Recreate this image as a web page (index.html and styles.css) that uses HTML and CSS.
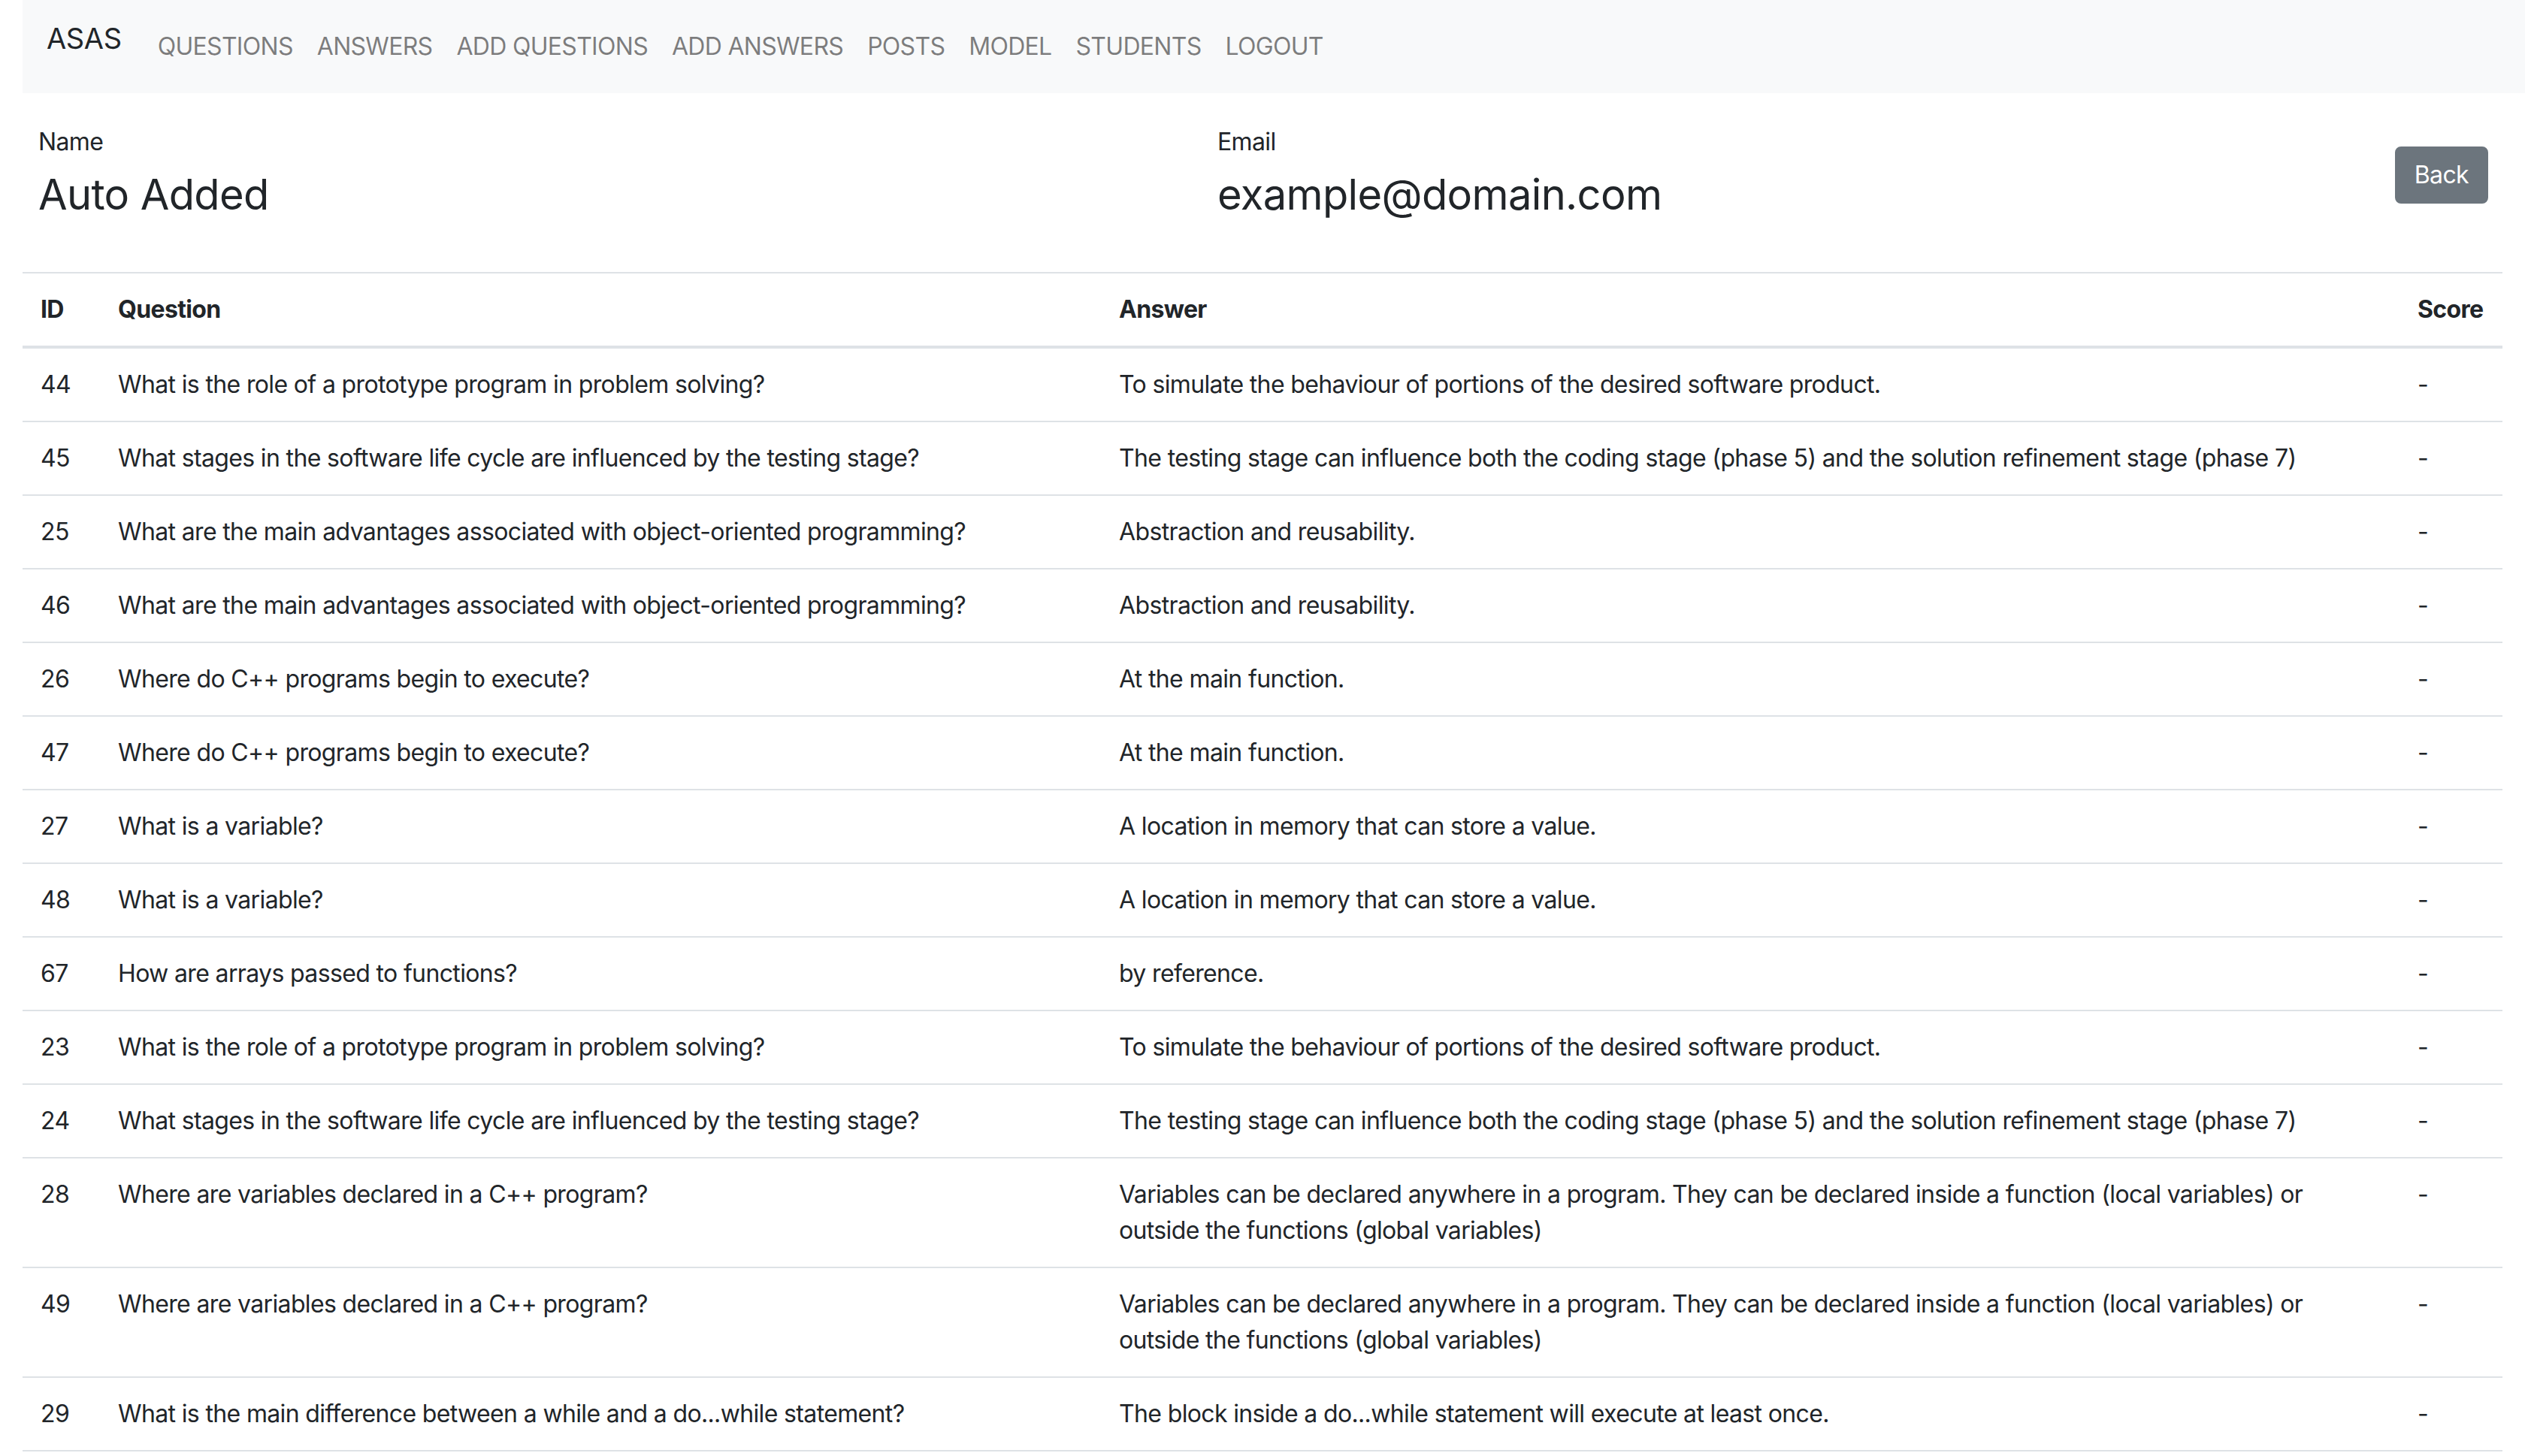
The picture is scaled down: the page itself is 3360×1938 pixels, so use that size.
FILE: index.html
```html
<!DOCTYPE html>
<html lang="en">
<head>
<meta charset="utf-8">
<title>ASAS - Student</title>
<link rel="stylesheet" href="styles.css">
</head>
<body>
<div class="page">
  <nav class="navbar">
    <a class="brand" href="#">ASAS</a>
    <ul class="nav-links">
      <li><a href="#">QUESTIONS</a></li>
      <li><a href="#">ANSWERS</a></li>
      <li><a href="#">ADD QUESTIONS</a></li>
      <li><a href="#">ADD ANSWERS</a></li>
      <li><a href="#">POSTS</a></li>
      <li><a href="#">MODEL</a></li>
      <li><a href="#">STUDENTS</a></li>
      <li><a href="#">LOGOUT</a></li>
    </ul>
  </nav>

  <section class="info">
    <div class="field field-name">
      <div class="field-label">Name</div>
      <div class="field-value">Auto Added</div>
    </div>
    <div class="field field-email">
      <div class="field-label">Email</div>
      <div class="field-value">example@domain.com</div>
    </div>
    <a class="btn-back" href="#">Back</a>
  </section>

  <table class="results">
    <colgroup>
      <col class="c-id">
      <col class="c-q">
      <col class="c-a">
      <col class="c-s">
    </colgroup>
    <thead>
      <tr><th>ID</th><th>Question</th><th>Answer</th><th>Score</th></tr>
    </thead>
    <tbody>
      <tr><td>44</td><td>What is the role of a prototype program in problem solving?</td><td>To simulate the behaviour of portions of the desired software product.</td><td>-</td></tr>
      <tr><td>45</td><td>What stages in the software life cycle are influenced by the testing stage?</td><td>The testing stage can influence both the coding stage (phase 5) and the solution refinement stage (phase 7)</td><td>-</td></tr>
      <tr><td>25</td><td>What are the main advantages associated with object-oriented programming?</td><td>Abstraction and reusability.</td><td>-</td></tr>
      <tr><td>46</td><td>What are the main advantages associated with object-oriented programming?</td><td>Abstraction and reusability.</td><td>-</td></tr>
      <tr><td>26</td><td>Where do C++ programs begin to execute?</td><td>At the main function.</td><td>-</td></tr>
      <tr><td>47</td><td>Where do C++ programs begin to execute?</td><td>At the main function.</td><td>-</td></tr>
      <tr><td>27</td><td>What is a variable?</td><td>A location in memory that can store a value.</td><td>-</td></tr>
      <tr><td>48</td><td>What is a variable?</td><td>A location in memory that can store a value.</td><td>-</td></tr>
      <tr><td>67</td><td>How are arrays passed to functions?</td><td>by reference.</td><td>-</td></tr>
      <tr><td>23</td><td>What is the role of a prototype program in problem solving?</td><td>To simulate the behaviour of portions of the desired software product.</td><td>-</td></tr>
      <tr><td>24</td><td>What stages in the software life cycle are influenced by the testing stage?</td><td>The testing stage can influence both the coding stage (phase 5) and the solution refinement stage (phase 7)</td><td>-</td></tr>
      <tr><td>28</td><td>Where are variables declared in a C++ program?</td><td>Variables can be declared anywhere in a program. They can be declared inside a function (local variables) or outside the functions (global variables)</td><td>-</td></tr>
      <tr><td>49</td><td>Where are variables declared in a C++ program?</td><td>Variables can be declared anywhere in a program. They can be declared inside a function (local variables) or outside the functions (global variables)</td><td>-</td></tr>
      <tr><td>29</td><td>What is the main difference between a while and a do...while statement?</td><td>The block inside a do...while statement will execute at least once.</td><td>-</td></tr>
    </tbody>
  </table>
</div>
</body>
</html>
```

FILE: styles.css
```css
* { box-sizing: border-box; }

html, body {
  margin: 0;
  padding: 0;
  background: #ffffff;
}

body {
  font-family: Inter, "Noto Sans", "Liberation Sans", sans-serif;
  font-size: 32px;
  line-height: 48px;
  letter-spacing: -0.02em;
  color: #212529;
}

a { text-decoration: none; }

.page {
  padding: 0 30px;
  width: 3360px;
}

/* ---------- navbar ---------- */
.navbar {
  display: flex;
  align-items: flex-start;
  height: 124px;
  margin-right: -30px;
  padding: 27px 32px 0 32px;
  background: #f8f9fa;
}

.brand {
  font-size: 38px;
  line-height: 48px;
  letter-spacing: -0.01em;
  color: #212529;
  margin-right: 32px;
}

.nav-links {
  display: flex;
  list-style: none;
  margin: 11px 0 0 0;
  padding: 0;
}

.nav-links a {
  display: block;
  padding: 0 16px;
  font-size: 32px;
  line-height: 48px;
  letter-spacing: -0.022em;
  color: rgba(0, 0, 0, 0.5);
}

/* ---------- info ---------- */
.info {
  display: flex;
  align-items: flex-start;
  height: 238px;
  padding: 41px 19px 0 21px;
}

.field-name { width: 1569px; }
.field-email { flex: 1; }

.field-label {
  font-size: 32px;
  line-height: 48px;
  margin-bottom: 13px;
}

.field-value {
  font-size: 56px;
  line-height: 67px;
}

.btn-back {
  display: inline-block;
  margin-top: 30px;
  padding: 12px 24px;
  font-size: 32px;
  line-height: 48px;
  color: #ffffff;
  background: #6c757d;
  border: 2px solid #6c757d;
  border-radius: 8px;
}

/* ---------- table ---------- */
.results {
  width: 3300px;
  table-layout: fixed;
  border-collapse: collapse;
}

.c-id { width: 103px; }
.c-q  { width: 1332px; }
.c-a  { width: 1728px; }
.c-s  { width: 137px; }

.results th,
.results td {
  padding: 24px;
  text-align: left;
  vertical-align: top;
  border-top: 2px solid #dee2e6;
}

.results th {
  font-weight: 700;
  border-bottom: 4px solid #dee2e6;
}

.results tbody tr:last-child td {
  border-bottom: 2px solid #dee2e6;
}
```
